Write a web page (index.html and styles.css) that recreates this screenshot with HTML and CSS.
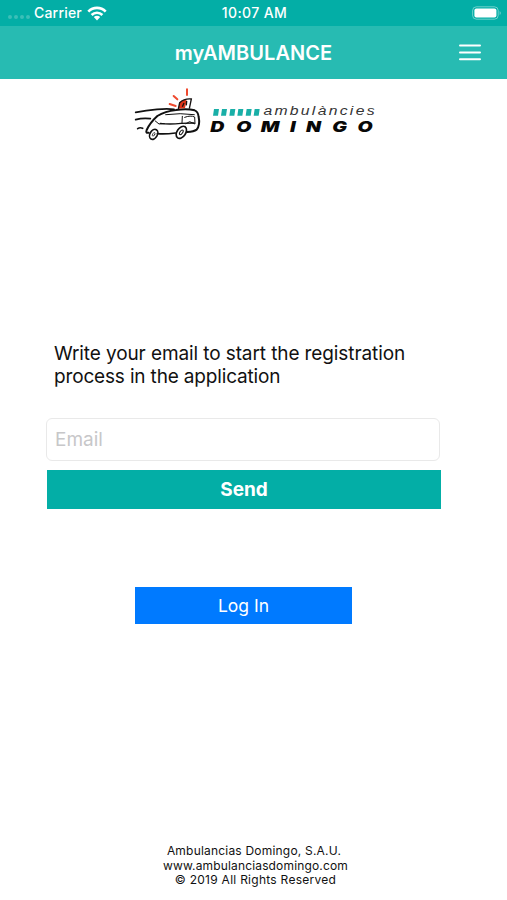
FILE: index.html
```html
<!DOCTYPE html>
<html lang="en">
<head>
<meta charset="utf-8">
<title>myAMBULANCE</title>
<link rel="stylesheet" href="styles.css">
</head>
<body>
<div class="status">
  <div class="status-left">
    <span class="dots"><i></i><i></i><i></i><i></i></span>
    <span class="carrier">Carrier</span>
    <svg class="wifi" viewBox="0 0 20 15" width="20" height="15">
      <g fill="none" stroke="#fff" stroke-width="2.7">
        <path d="M1.3 5.6C6.2.7 13.8.7 18.7 5.6"/>
        <path d="M4.6 9C7.7 6 12.3 6 15.4 9"/>
      </g>
      <path fill="#fff" d="M6.8 11.1Q10 8.5 13.2 11.1L10 14.4Z"/>
    </svg>
  </div>
  <span class="time">10:07 AM</span>
  <svg class="battery" viewBox="0 0 30 14" width="30" height="14">
    <rect x=".6" y=".8" width="25.6" height="12.4" rx="3.8" fill="none" stroke="#fff" stroke-opacity=".42"/>
    <rect x="2.4" y="2.6" width="22" height="8.8" rx="2" fill="#fff"/>
    <path d="M27.7 4.9Q29.7 7 27.7 9.1Z" fill="#fff" fill-opacity=".5"/>
  </svg>
</div>
<header class="navbar">
  <h1>myAMBULANCE</h1>
  <svg class="menu" viewBox="0 0 22 17" width="22" height="17">
    <path d="M1 1.5H21M1 8.5H21M1 15.3H21" stroke="#fff" stroke-width="2" stroke-linecap="round"/>
  </svg>
</header>
<main>
  <svg class="logo" viewBox="0 0 750 180" width="250" height="60">
    <g fill="none" stroke="#111" stroke-linecap="round" stroke-linejoin="round">
      <path stroke-width="5" d="M17 85Q48 79 81 76T132 76"/>
      <path stroke-width="5" d="M17 107Q38 101 61 104"/>
      <path stroke-width="5" d="M23 134Q30 129 38 133"/>
      <path stroke-width="6" d="M56 146Q46 148 50 138C57 122 69 108 82 96Q105 82 138 78Q171 73 194 79Q204 82 206 99Q211 123 200 137Q192 143 172 144"/>
      <path stroke-width="5" d="M82 149Q106 151 136 147"/>
      <path stroke-width="3" d="M76 111L87 120L103 119"/>
      <path stroke-width="4" d="M91 118Q118 122 153 118L192 117"/>
      <path stroke-width="3" d="M107 92Q151 86 193 92M157 97L156 117M164 100Q182 93 194 99L195 120L179 113L168 119"/>
      <ellipse cx="71" cy="151" rx="11" ry="16" stroke-width="5" transform="rotate(30 71 151)"/>
      <ellipse cx="71" cy="151" rx="3" ry="6" stroke-width="2" transform="rotate(30 71 151)"/>
      <ellipse cx="154" cy="145" rx="13" ry="20" stroke-width="5" transform="rotate(34 154 145)"/>
      <ellipse cx="154" cy="145" rx="4" ry="8" stroke-width="3" transform="rotate(34 154 145)"/>
    </g>
    <path d="M145 74L149 55Q158 45 170 49L165 72Z" fill="#df3519"/>
    <path d="M145 75L149 56Q163 43 184 45L178 74M157 68L162 57M170 51L169 64" fill="none" stroke="#171211" stroke-width="4"/>
    <path d="M171 16V33M131 36L142 46M119 60L137 66" stroke="#ef4a2f" stroke-width="6" stroke-linecap="round"/>
    <path fill="#19afa7" d="M252 75h15l-3 20h-15zM276 75h15l-3 20h-15zM301 75h15l-3 20h-15zM325 75h15l-3 20h-15zM350 75h15l-3 20h-15zM374 75h15l-3 20h-15z"/>
    <text class="logo-top" transform="scale(1.15 1)" x="348" y="94" textLength="290">ambulàncies</text>
    <text class="logo-name" transform="scale(1.3 1)" y="144" x="185 245 302 369 406 467 525">DOMINGO</text>
  </svg>
  <p class="intro">Write your email to start the registration<br><span class="intro-end">process in the application</span></p>
  <form class="form">
    <input class="email" type="text" placeholder="Email">
    <button class="send" type="button">Send</button>
  </form>
  <button class="login" type="button">Log In</button>
</main>
<footer>
  <div class="company">Ambulancias Domingo, S.A.U.</div>
  <div class="site">www.ambulanciasdomingo.com</div>
  <div class="rights">© 2019 All Rights Reserved</div>
</footer>
</body>
</html>
```
FILE: styles.css
```css
* { box-sizing: border-box; }
body {
  margin: 0;
  height: 900px;
  display: flex;
  flex-direction: column;
  background: #fff;
  color: #111;
  font-family: Inter, "Liberation Sans", sans-serif;
  overflow: hidden;
}
.status {
  height: 26px;
  flex: none;
  padding: 0 6px 0 8px;
  display: grid;
  grid-template-columns: 1fr auto 1fr;
  align-items: center;
  background: #03aea6;
  color: #fff;
  font-size: 14px;
  font-weight: 500;
}
.status-left { display: flex; align-items: center; }
.dots { display: flex; gap: 2px; width: 26px; padding-top: 8px; }
.dots i { width: 4px; height: 4px; border-radius: 50%; background: #3bbfb8; }
.carrier { letter-spacing: .2px; line-height: 26px; }
.time { letter-spacing: .4px; line-height: 26px; }
.carrier, .time { margin-top: -1px; }
.wifi { margin-left: 5px; }
.battery { justify-self: end; margin-right: -1px; }
.navbar {
  height: 53px;
  flex: none;
  display: grid;
  grid-template-columns: 1fr auto 1fr;
  align-items: center;
  padding: 0 26px;
  background: #27bbb2;
  color: #fff;
}
h1 { grid-column: 2; margin: 0; font-size: 20px; font-weight: 600; letter-spacing: .05px; }
.menu { justify-self: end; }
main { flex: 1; display: flex; flex-direction: column; align-items: flex-start; }
.logo { display: block; margin: 5px 0 0 130px; }
.logo-top { font: italic 41px "Liberation Sans", sans-serif; fill: #333; }
.logo-name { font: italic 900 45px Inter, sans-serif; fill: #080808; }
.intro { margin: 198px 0 0 54px; font-size: 19px; line-height: 23px; letter-spacing: -.1px; }
.intro-end { letter-spacing: -.16px; }
.form { margin: 30px 0 0 46px; display: flex; flex-direction: column; }
.email {
  width: 394px;
  height: 43px;
  padding: 0 8px;
  border: 1px solid #e9e9e9;
  border-radius: 6px;
  background: #fff;
  font: 19px Inter, sans-serif;
}
.email::placeholder { color: #c7c7c9; opacity: 1; }
button { border: 0; padding: 0; color: #fff; font-family: inherit; }
.send { width: 394px; height: 39px; margin: 9px 0 0 1px; background: #03aea6; font-size: 19px; font-weight: 700; }
.login { width: 217px; height: 37px; margin: 78px 0 0 135px; background: #007aff; font-size: 17.5px; }
footer { width: 511px; flex: none; padding-bottom: 12px; text-align: center; font-size: 12px; line-height: 14.6px; }
.company { letter-spacing: .2px; padding-right: 3px; }
.site { letter-spacing: .15px; }
.rights { letter-spacing: .27px; }
```
